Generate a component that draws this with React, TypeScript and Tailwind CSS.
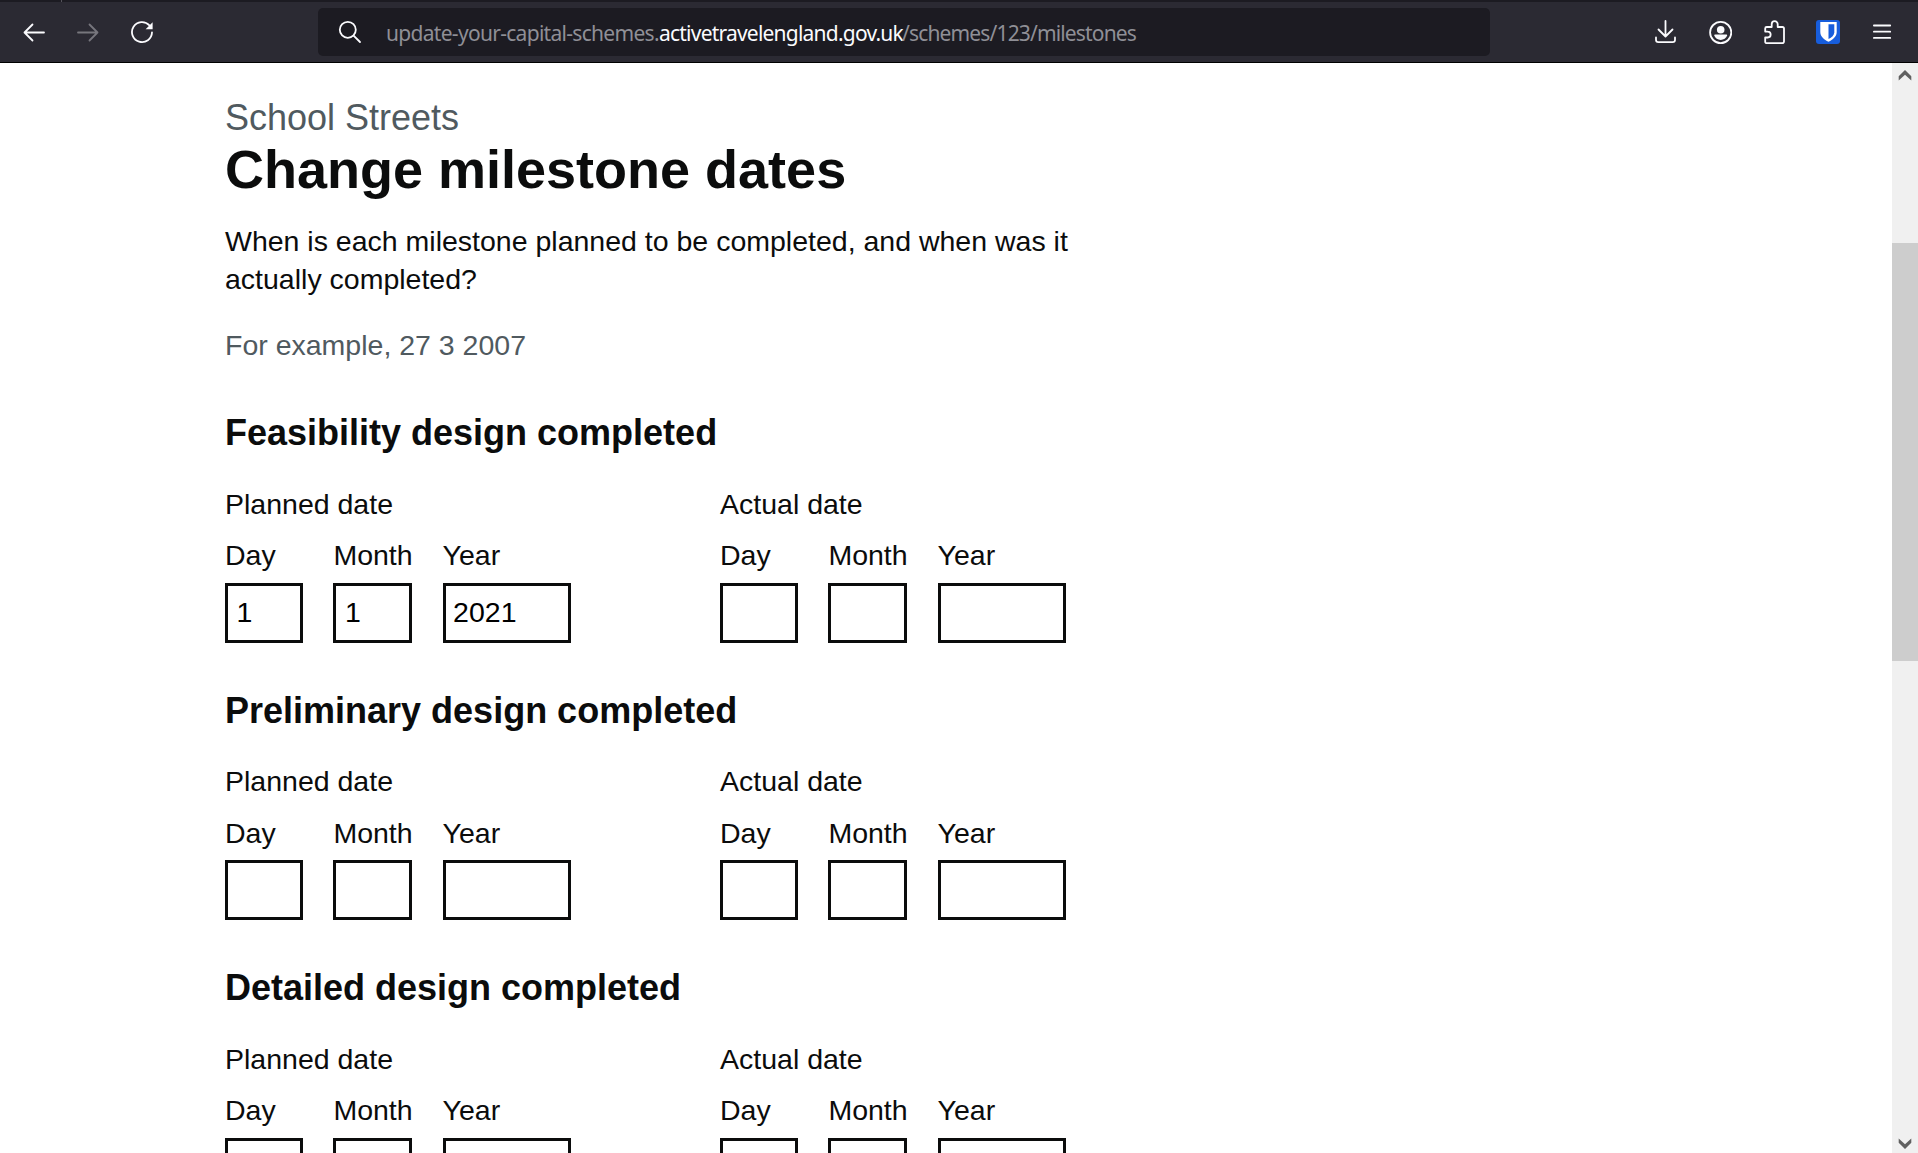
import type { ReactNode } from "react";

const milestones = [
  { title: "Feasibility design completed", planned: ["1", "1", "2021"] },
  { title: "Preliminary design completed", planned: ["", "", ""] },
  { title: "Detailed design completed", planned: ["", "", ""] },
];

function Icon({ children, className = "" }: { children: ReactNode; className?: string }) {
  return (
    <svg
      viewBox="0 0 24 24"
      fill="none"
      stroke="currentColor"
      strokeWidth="1.8"
      strokeLinecap="round"
      strokeLinejoin="round"
      className={`size-6 shrink-0 ${className}`}
    >
      {children}
    </svg>
  );
}

function Toolbar() {
  return (
    <header className="flex h-[63px] shrink-0 flex-col border-b border-black bg-[#2b2a33] text-[#fbfbfe]">
      <div className="h-[2px] shrink-0 bg-[#1c1b22] pl-[61px]">
        <div className="h-full w-px bg-[#55545c]" />
      </div>
      <div className="flex flex-1 items-center">
        <Icon className="ml-[22px]">
          <path d="M22 12.5H2.5M10.5 4.5l-8 8 8 8" />
        </Icon>
        <Icon className="ml-[30px] text-[#77767d]">
          <path d="M2 12.5h19.5M13.5 4.5l8 8-8 8" />
        </Icon>
        <Icon className="ml-[30px]">
          <path d="M22 12.3a10 10 0 1 1-2.6-6.9" />
          <path d="M22.6 2.3v7h-7z" fill="currentColor" stroke="none" />
        </Icon>
        <div className="ml-[164px] flex h-12 w-[1172px] items-center rounded-[5px] bg-[#1c1b22]">
          <Icon className="ml-[20px]">
            <circle cx="9.8" cy="9.8" r="8" />
            <path d="M15.6 15.6l6.4 6.4" />
          </Icon>
          <div className="ml-[24px] flex pt-[2px] font-['Noto_Sans',sans-serif] text-[21px] leading-[28px] whitespace-pre text-[#8f8f96]">
            <span className="w-[273px] tracking-[-0.7px]">update-your-capital-schemes.</span>
            <span className="w-[243px] tracking-[-0.78px] text-[#fbfbfe]">activetravelengland.gov.uk</span>
            <span className="tracking-[-0.85px]">/schemes/123/milestones</span>
          </div>
        </div>
        <Icon className="ml-[163px]">
          <path d="M12.5 1v15M5.5 9.5l7 7 7-7M3 17.5v2.2a2.4 2.4 0 0 0 2.4 2.4h14.2a2.4 2.4 0 0 0 2.4-2.4v-2.2" />
        </Icon>
        <Icon className="ml-[31px]">
          <circle cx="12.7" cy="12.5" r="10.6" />
          <circle cx="12.7" cy="9.7" r="3.8" fill="currentColor" stroke="none" />
          <path
            d="M6.2 15.6c0-.7.5-1 1-1h11c.6 0 1 .3 1 1-1 2.7-3.6 4.3-6.5 4.3s-5.5-1.6-6.5-4.3z"
            fill="currentColor"
            stroke="none"
          />
        </Icon>
        <Icon className="ml-[31px]">
          <path d="M2.2 11.5v-3a1.5 1.5 0 0 1 1.5-1.5h5V4.200a3 3 0 0 1 6 0V7h4.700a1.600 1.600 0 0 1 1.600 1.600v13a1.600 1.600 0 0 1-1.600 1.600H3.700a1.500 1.500 0 0 1-1.500-1.500v-4.200h2.500a2.950 2.950 0 0 0 0-5.900z" />
        </Icon>
        <Icon className="ml-[29px]">
          <rect width="24" height="24" rx="3" fill="#175ddc" stroke="none" />
          <path d="M4.3 2h16.400v10c0 4.500-3.800 7.700-8.200 9.800-4.400-2.100-8.200-5.300-8.200-9.800z" fill="#fff" stroke="none" />
          <path d="M12.5 4.300h5.800v7.900c0 3-2.500 5.200-5.800 6.900z" fill="#175ddc" stroke="none" />
        </Icon>
        <Icon className="ml-[30px]">
          <path d="M3.9 5.500h16.300M3.900 11.700h16.300M3.900 17.900h16.300" />
        </Icon>
      </div>
    </header>
  );
}

function DateField({ label, value, size }: { label: string; value: string; size: string }) {
  return (
    <label className="block">
      <span className="mb-[7.8px] block">{label}</span>
      <input
        defaultValue={value}
        className={`block h-[60px] rounded-none border-[3px] border-[#0b0c0c] text-black outline-none ${size}`}
      />
    </label>
  );
}

function DateGroup({ legend, values }: { legend: string; values: string[] }) {
  return (
    <fieldset className="w-[495px]">
      <legend className="mb-[14.4px] pt-[0.3px]">{legend}</legend>
      <div className="flex gap-[30px]">
        <DateField label="Day" value={values[0]} size="w-[78.4px] px-[8.5px]" />
        <DateField label="Month" value={values[1]} size="w-[78.4px] px-[8.5px]" />
        <DateField label="Year" value={values[2]} size="w-[128.25px] px-[7.5px]" />
      </div>
    </fieldset>
  );
}

function Scrollbar() {
  return (
    <div className="flex w-[26px] shrink-0 flex-col bg-[#f0f0f0]">
      <svg viewBox="0 0 26 26" className="h-[26px] w-[26px]" fill="#606060">
        <path d="M6.7 13.3L13 7l6.3 6.3V17.500L13 11.800l-6.300 5.700z" />
      </svg>
      <div className="mt-[154px] h-[418px] bg-[#cdcdcd]" />
      <div className="flex-1" />
      <svg viewBox="0 0 26 26" className="h-[26px] w-[26px]" fill="#606060">
        <path d="M6.7 15.7L13 22l6.3-6.3V11.500L13 17.200l-6.300-5.700z" />
      </svg>
    </div>
  );
}

export default function App() {
  return (
    <div className="flex h-[1153px] w-[1918px] flex-col overflow-hidden bg-white">
      <Toolbar />
      <div className="flex min-h-0 flex-1">
        <main className="min-w-0 flex-1 overflow-hidden pt-[32px] pl-[225px] font-['Liberation_Sans',Arial,sans-serif] text-[28.5px] leading-[37.5px] text-[#0b0c0c]">
          <div className="w-[890px]">
            <span className="block text-[36px] leading-[45px] text-[#505a5f]">School Streets</span>
            <h1 className="-mt-px mb-[24.2px] text-[54px] leading-[60px] font-bold">Change milestone dates</h1>
            <p className="mb-[29.2px] w-[855px]">
              When is each milestone planned to be completed, and when was it actually completed?
            </p>
            <p className="mb-[45.4px] text-[#505a5f]">For example, 27 3 2007</p>
            {milestones.map((m) => (
              <section key={m.title} className="mb-[45px]">
                <h2 className="mb-[30px] text-[36px] leading-[45px] font-bold">{m.title}</h2>
                <div className="flex w-[990px]">
                  <DateGroup legend="Planned date" values={m.planned} />
                  <DateGroup legend="Actual date" values={["", "", ""]} />
                </div>
              </section>
            ))}
          </div>
        </main>
        <Scrollbar />
      </div>
    </div>
  );
}
